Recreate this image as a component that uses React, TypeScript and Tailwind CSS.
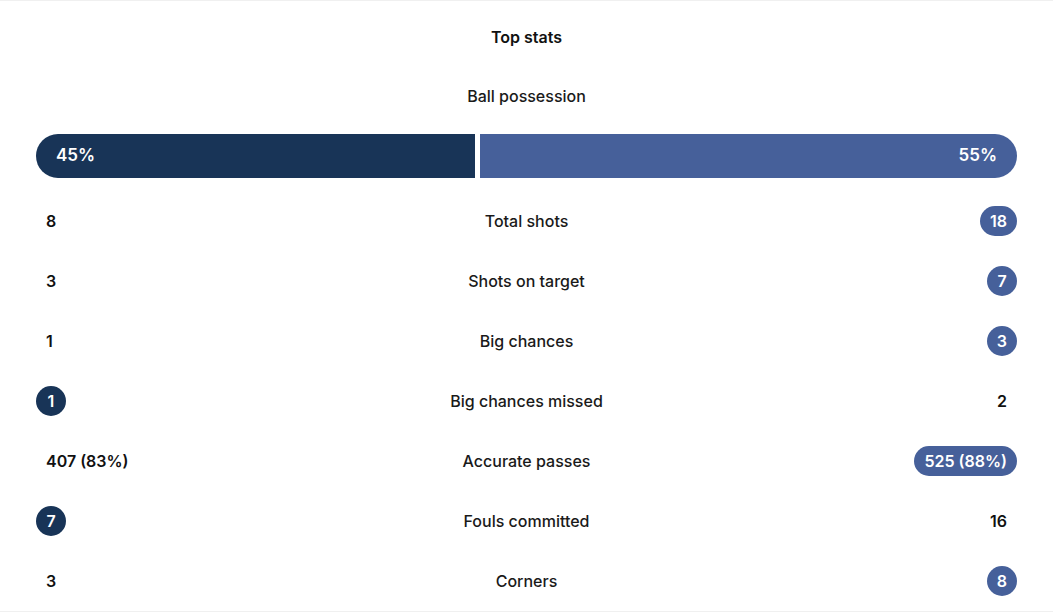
import React from 'react';

type Side = 'home' | 'away' | null;

const rows: { label: string; home: string; away: string; hi: Side }[] = [
  { label: 'Total shots', home: '8', away: '18', hi: 'away' },
  { label: 'Shots on target', home: '3', away: '7', hi: 'away' },
  { label: 'Big chances', home: '1', away: '3', hi: 'away' },
  { label: 'Big chances missed', home: '1', away: '2', hi: 'home' },
  { label: 'Accurate passes', home: '407 (83%)', away: '525 (88%)', hi: 'away' },
  { label: 'Fouls committed', home: '7', away: '16', hi: 'home' },
  { label: 'Corners', home: '3', away: '8', hi: 'away' },
];

const Value = ({ text, hi, side }: { text: string; hi: boolean; side: 'home' | 'away' }) => {
  if (!hi) {
    return <span className="px-[10px] text-[16px] font-semibold text-[#111]">{text}</span>;
  }
  const bg = side === 'home' ? 'bg-[#183457]' : 'bg-[#46609a]';
  return (
    <span className={`${bg} h-[30px] min-w-[30px] px-[10px] rounded-full flex items-center justify-center text-[16px] font-semibold text-white`}>
      {text}
    </span>
  );
};

const App = () => {
  return (
    <div className="w-[1053px] h-[615px] bg-white border-t border-[#f0f0f0]" style={{ fontFamily: 'Inter, "Noto Sans", sans-serif' }}>
      <div className="h-[71px] flex items-center justify-center text-[16px] font-semibold text-[#111]">Top stats</div>
      <div className="h-[48px] flex items-center justify-center text-[16px] font-medium text-[#1a1a1a]">Ball possession</div>
      <div className="mx-[36px] mt-[14px] h-[44px] flex gap-[5px]">
        <div className="w-[439px] bg-[#183457] rounded-l-full flex items-center pl-[20px] text-[17px] font-semibold text-white">45%</div>
        <div className="flex-1 bg-[#46609a] rounded-r-full flex items-center justify-end pr-[20px] text-[17px] font-semibold text-white">55%</div>
      </div>
      <div className="mt-[13px] border-b border-[#f0f0f0]">
        {rows.map((r) => (
          <div key={r.label} className="h-[60px] mx-[36px] grid grid-cols-[1fr_auto_1fr] items-center">
            <div className="flex justify-start">
              <Value text={r.home} hi={r.hi === 'home'} side="home" />
            </div>
            <div className="text-[16px] font-medium text-[#1a1a1a] text-center">{r.label}</div>
            <div className="flex justify-end">
              <Value text={r.away} hi={r.hi === 'away'} side="away" />
            </div>
          </div>
        ))}
      </div>
    </div>
  );
};

export default App;
